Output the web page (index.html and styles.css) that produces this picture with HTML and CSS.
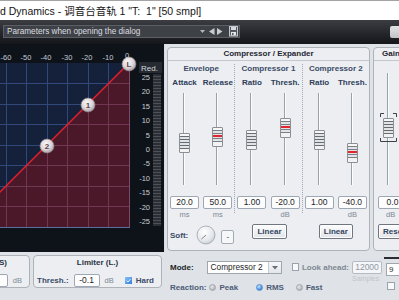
FILE: index.html
```html
<!DOCTYPE html>
<html>
<head>
<meta charset="utf-8">
<link rel="stylesheet" href="styles.css">
</head>
<body>
<div class="titlebar">d Dynamics - 调音台音轨 1 "T:&nbsp; 1" [50 smpl]</div>
<div class="toolbar">
  <div class="preset">
    <span class="preset-name">Parameters when opening the dialog</span>
    <svg class="tools" width="38" height="11" viewBox="0 0 38 11">
      <path d="M0 4h5l-2.5 3z" fill="#b4b8be"/>
      <path d="M14.5 2v7l-5.5-3.5z" fill="#c9cdd3"/>
      <path d="M17 2v7l5.5-3.5z" fill="#c9cdd3"/>
      <rect x="29.5" y="0.5" width="8" height="9.5" fill="#55585e" stroke="#c4c8ce"/>
      <rect x="31" y="1" width="5" height="3" fill="#d4d8de"/>
      <rect x="31" y="6" width="5" height="3.5" fill="#e4e7ea"/>
      <rect x="32" y="7" width="1.5" height="2" fill="#55585e"/>
    </svg>
  </div>
  <div class="tb-btn"></div>
</div>

<div class="main">
  <div class="graph">
    <svg width="164" height="208" viewBox="0 0 164 208">
      <defs>
        <clipPath id="redclip"><polygon points="129,19 129,183 -35,183"/></clipPath>
        <radialGradient id="ball" cx="42%" cy="36%" r="65%">
          <stop offset="0" stop-color="#fbf9fa"/>
          <stop offset="0.6" stop-color="#ddd6d9"/>
          <stop offset="1" stop-color="#a99fa4"/>
        </radialGradient>
        <pattern id="meterp" width="8" height="3" patternUnits="userSpaceOnUse">
          <rect width="8" height="3" fill="#2b2f35"/>
          <rect y="2" width="8" height="1" fill="#4b4f56"/>
        </pattern>
      </defs>
      <rect x="0" y="19" width="129" height="164" fill="#15213a"/>
      <g stroke="#30487a" stroke-width="1">
        <path d="M6.5 19V183M26.5 19V183M47.5 19V183M67.5 19V183M88.5 19V183M108.5 19V183"/>
        <path d="M0 39.5H129M0 60.5H129M0 80.5H129M0 101.5H129M0 121.5H129M0 142.5H129M0 162.5H129"/>
      </g>
      <polygon points="129,19 129,183 -35,183" fill="#4b1829"/>
      <g stroke="#713650" stroke-width="1" clip-path="url(#redclip)">
        <path d="M6.5 19V183M26.5 19V183M47.5 19V183M67.5 19V183M88.5 19V183M108.5 19V183"/>
        <path d="M0 39.5H129M0 60.5H129M0 80.5H129M0 101.5H129M0 121.5H129M0 142.5H129M0 162.5H129"/>
      </g>
      <path d="M129.5 19V183" stroke="#7a4a66"/>
      <path d="M0 183.5H130" stroke="#5b6f9e"/>
      <line x1="129" y1="19" x2="-35" y2="183" stroke="#e3202b" stroke-width="1.4"/>
      <g class="ball">
        <circle cx="129" cy="20" r="7" fill="url(#ball)" stroke="#8a8286" stroke-width="0.6"/>
        <text x="129" y="23" class="balltxt">L</text>
        <circle cx="88" cy="61" r="7" fill="url(#ball)" stroke="#8a8286" stroke-width="0.6"/>
        <text x="88" y="64" class="balltxt">1</text>
        <circle cx="47" cy="102" r="7" fill="url(#ball)" stroke="#8a8286" stroke-width="0.6"/>
        <text x="47" y="105" class="balltxt">2</text>
      </g>
      <g class="axis">
        <text x="6" y="16">-60</text>
        <text x="26" y="16">-50</text>
        <text x="46" y="16">-40</text>
        <text x="67" y="16">-30</text>
        <text x="87" y="16">-20</text>
        <text x="108" y="16">-10</text>
        <text x="127" y="14">0</text>
      </g>
      <rect x="139" y="18" width="23" height="11" fill="#262a31"/>
      <text x="141" y="26.5" class="redlbl">Red.</text>
      <rect x="153" y="30" width="8" height="152" fill="url(#meterp)"/>
      <g class="scale">
        <text x="150" y="36">25</text>
        <text x="150" y="50.4">20</text>
        <text x="150" y="64.8">15</text>
        <text x="150" y="79.2">10</text>
        <text x="150" y="93.6">5</text>
        <text x="150" y="108">0</text>
        <text x="150" y="122.4">-5</text>
        <text x="150" y="136.8">-10</text>
        <text x="150" y="151.2">-15</text>
        <text x="150" y="165.6">-20</text>
        <text x="150" y="180">-25</text>
      </g>
    </svg>
  </div>

  <section class="panel comp">
    <div class="ptitle">Compressor / Expander</div>
    <div class="cols">
      <div class="col">
        <div class="sub">Envelope</div>
        <div class="faders">
          <div class="fader">
            <div class="lbl">Attack</div>
            <div class="track"><div class="knob" style="top:40px"></div></div>
            <div class="num">20.0</div>
            <div class="unit">ms</div>
          </div>
          <div class="fader">
            <div class="lbl">Release</div>
            <div class="track"><div class="knob red" style="top:34px"></div></div>
            <div class="num">50.0</div>
            <div class="unit">ms</div>
          </div>
        </div>
      </div>
      <div class="col sep">
        <div class="sub">Compressor 1</div>
        <div class="faders">
          <div class="fader">
            <div class="lbl">Ratio</div>
            <div class="track"><div class="knob" style="top:37px"></div></div>
            <div class="num">1.00</div>
            <div class="unit"></div>
          </div>
          <div class="fader">
            <div class="lbl">Thresh.</div>
            <div class="track"><div class="knob red" style="top:25px"></div></div>
            <div class="num">-20.0</div>
            <div class="unit">dB</div>
          </div>
        </div>
      </div>
      <div class="col sep">
        <div class="sub">Compressor 2</div>
        <div class="faders">
          <div class="fader">
            <div class="lbl">Ratio</div>
            <div class="track"><div class="knob" style="top:37px"></div></div>
            <div class="num">1.00</div>
            <div class="unit"></div>
          </div>
          <div class="fader">
            <div class="lbl">Thresh.</div>
            <div class="track"><div class="knob red" style="top:50px"></div></div>
            <div class="num">-40.0</div>
            <div class="unit">dB</div>
          </div>
        </div>
      </div>
    </div>
    <div class="foot">
      <div class="fcol soft">
        <span class="softlbl">Soft:</span>
        <svg class="dial" width="20" height="20" viewBox="0 0 20 20">
          <defs>
            <radialGradient id="dialg" cx="40%" cy="35%" r="70%">
              <stop offset="0" stop-color="#ffffff"/>
              <stop offset="0.7" stop-color="#e4e7ea"/>
              <stop offset="1" stop-color="#c2c7cd"/>
            </radialGradient>
          </defs>
          <circle cx="10" cy="10" r="9" fill="url(#dialg)" stroke="#9ca3ab" stroke-width="0.8"/>
          <line x1="10" y1="10" x2="5.5" y2="14" stroke="#737a83" stroke-width="0.9"/>
        </svg>
        <span class="mini">-</span>
      </div>
      <div class="fcol"><span class="btn">Linear</span></div>
      <div class="fcol"><span class="btn">Linear</span></div>
    </div>
  </section>

  <section class="panel gain">
    <div class="ptitle gtitle">Gain</div>
    <div class="gbody">
      <div class="gtrack">
        <svg class="bracket" width="17" height="29" viewBox="0 0 17 29">
          <path d="M0.5 4V0.5H4M13 0.5H16.5V4M0.5 25V28.5H16.5V25" fill="none" stroke="#3c4048"/>
        </svg>
        <div class="knob" style="top:45px"></div>
      </div>
      <div class="num gnum">0.0</div>
      <div class="unit gunit">dB</div>
      <span class="btn gbtn">Reset</span>
    </div>
  </section>
</div>

<div class="bottom">
  <section class="panel spanel">
    <div class="btitle sright">(S)</div>
    <div class="brow sright-row">
      <span class="num small">0</span>
      <span class="unit2">dB</span>
    </div>
  </section>
  <section class="panel limiter">
    <div class="btitle">Limiter (L.)</div>
    <div class="brow">
      <span class="lbl2">Thresh.:</span>
      <span class="num small lim">-0.1</span>
      <span class="unit2">dB</span>
      <span class="check on"><svg width="7" height="7" viewBox="0 0 7 7"><path d="M1.5 3.5l1.5 1.5 2.5-3" fill="none" stroke="#e8f2ff" stroke-width="1"/></svg></span>
      <span class="lbl2 hard">Hard</span>
    </div>
  </section>
  <div class="modearea">
    <div class="mrow">
      <span class="modelbl">Mode:</span>
      <span class="select"><span class="seltxt">Compressor 2</span><span class="selbtn"><svg width="6" height="4" viewBox="0 0 6 4"><path d="M0 0h6L3 3.5z" fill="#6a717a"/></svg></span></span>
      <span class="check off"></span>
      <span class="lalbl">Look ahead:</span>
      <span class="lawrap"><span class="num lainput">12000</span><span class="samples">Samples</span></span>
    </div>
    <div class="rrow">
      <span class="reactlbl">Reaction:</span>
      <span class="radio gray r1"></span><span class="rlbl">Peak</span>
      <span class="radio blue r2"></span><span class="rlbl">RMS</span>
      <span class="radio gray r3"></span><span class="rlbl">Fast</span>
    </div>
  </div>
  <div class="edge">
    <div class="ebar"></div>
    <div class="ebox">9</div>
    <div class="echeck"></div>
  </div>
</div>
</body>
</html>
```

FILE: styles.css
```css
html, body {
  margin: 0;
  padding: 0;
}
body {
  width: 399px;
  height: 300px;
  overflow: hidden;
  background: #dfe2e6;
  font-family: "Liberation Sans", "Noto Sans CJK SC", sans-serif;
  color: #222;
}

/* title bar */
.titlebar {
  height: 19px;
  border-top: 1px solid #a3a3a3;
  background: #ffffff;
  font-size: 10.5px;
  line-height: 20px;
  color: #151515;
  white-space: nowrap;
}

/* toolbar */
.toolbar {
  height: 24px;
  box-sizing: border-box;
  padding-top: 5px;
  display: flex;
  align-items: flex-start;
  background: linear-gradient(#3b3d42, #23252a 60%, #14161a);
}
.preset {
  flex: none;
  margin-left: 3px;
  width: 237px;
  height: 13px;
  box-sizing: border-box;
  border: 1px solid #5c5f65;
  background: #3e4146;
  display: flex;
  align-items: center;
}
.preset-name {
  flex: 1;
  padding-left: 3px;
  font-size: 8.2px;
  color: #dcdde0;
  white-space: nowrap;
}
.tools {
  flex: none;
  margin-right: 1px;
}
.tb-btn {
  flex: none;
  margin-left: 150px;
  margin-top: 1px;
  width: 14px;
  height: 12px;
  border-radius: 2px;
  background: linear-gradient(#e2e4e7, #bfc2c6);
}

/* main row */
.main {
  display: flex;
  height: 208px;
}
.graph {
  flex: none;
  width: 164px;
  height: 208px;
  background: #0e131a;
  border-right: 1px solid #d8dce1;
}
.graph svg { display: block; }
.axis text {
  font-family: "Liberation Sans", sans-serif;
  font-size: 7.5px;
  fill: #c3cad6;
  text-anchor: middle;
}
.balltxt {
  font-family: "Liberation Sans", sans-serif;
  font-size: 8px;
  font-weight: bold;
  fill: #5a484f;
  text-anchor: middle;
}
.redlbl {
  font-family: "Liberation Sans", sans-serif;
  font-size: 8px;
  fill: #d4d8dd;
}
.scale text {
  font-family: "Liberation Sans", sans-serif;
  font-size: 7.5px;
  fill: #c8cdd4;
  text-anchor: end;
}

.panel {
  flex: none;
  box-sizing: border-box;
  background: #eceef1;
  border: 1px solid #aeb3ba;
  border-radius: 4px;
}
.comp {
  margin-left: 2px;
  margin-top: 3px;
  width: 203px;
  height: 204px;
  display: flex;
  flex-direction: column;
}
.ptitle {
  height: 13px;
  box-sizing: border-box;
  border-bottom: 1px solid #c3c8ce;
  text-align: center;
  font-size: 8px;
  font-weight: bold;
  line-height: 12px;
  color: #1f2631;
}
.cols {
  display: flex;
  height: 159px;
}
.col {
  flex: 1;
  margin-top: 3px;
  height: 149px;
}
.col.sep {
  border-left: 1px dotted #9ea8b6;
}
.sub {
  height: 10px;
  line-height: 10px;
  text-align: center;
  font-size: 8px;
  font-weight: bold;
  color: #3b4b67;
}
.faders {
  display: flex;
  margin-top: 4px;
}
.fader {
  flex: 1;
  display: flex;
  flex-direction: column;
  align-items: center;
}
.lbl {
  height: 10px;
  line-height: 10px;
  font-size: 8px;
  font-weight: bold;
  color: #2d3d59;
  white-space: nowrap;
}
.track, .gtrack {
  position: relative;
  width: 11px;
  height: 92px;
  margin-top: 5px;
}
.track::before, .gtrack::before {
  content: "";
  position: absolute;
  left: 4px;
  top: 0;
  bottom: 0;
  width: 2px;
  background: linear-gradient(to right, #98a0a9 50%, #fdfdfd 50%);
}
.knob {
  position: absolute;
  left: 0;
  width: 11px;
  height: 20px;
  box-sizing: border-box;
  border: 1px solid #8b9097;
  border-radius: 1px;
  background: linear-gradient(#f7f7f7 0 2px, #676b72 2px 3px, #e2e3e5 3px 5px, #676b72 5px 6px, #e2e3e5 6px 8px, #676b72 8px 9px, #e2e3e5 9px 11px, #676b72 11px 12px, #e2e3e5 12px 14px, #676b72 14px 15px, #f2f2f3 15px);
}
.knob.red {
  background: linear-gradient(#f7f7f7 0 2px, #7a7e85 2px 3px, #e2e3e5 3px 5px, #7a7e85 5px 6px, #e2e3e5 6px 7px, #e2262d 7px 9px, #e2e3e5 9px 10px, #7a7e85 10px 11px, #e2e3e5 11px 13px, #7a7e85 13px 14px, #f2f2f3 14px);
}
.num {
  box-sizing: border-box;
  width: 29px;
  height: 13px;
  margin-top: 11px;
  border: 1px solid #9ea8b4;
  border-radius: 2px;
  background: #fdfdfe;
  font-size: 8.5px;
  line-height: 11px;
  text-align: center;
  color: #1e1e1e;
}
.unit {
  height: 10px;
  line-height: 11px;
  font-size: 7.5px;
  color: #7d8997;
}
.foot {
  display: flex;
  padding-top: 4px;
}
.fcol {
  flex: 1;
  display: flex;
  justify-content: center;
  align-items: flex-start;
}
.fcol.soft {
  justify-content: flex-start;
  align-items: center;
  padding-left: 2px;
  margin-top: 1px;
}
.softlbl {
  font-size: 8px;
  font-weight: bold;
  color: #3b4b67;
  margin-right: 8px;
}
.dial {
  display: block;
}
.mini {
  margin-left: 5px;
  margin-top: 4px;
  width: 13px;
  height: 14px;
  box-sizing: border-box;
  border: 1px solid #a2aab4;
  border-radius: 2px;
  background: #f6f7f9;
  font-size: 8px;
  line-height: 12px;
  text-align: center;
  color: #333;
}
.btn {
  display: inline-block;
  height: 15px;
  box-sizing: border-box;
  padding: 0 4px;
  border: 1px solid #6f7680;
  border-radius: 2px;
  background: linear-gradient(#fdfdfd, #e1e4e8);
  box-shadow: inset 0 0 0 1px #ffffff;
  font-size: 8px;
  font-weight: bold;
  line-height: 13px;
  color: #34445e;
  white-space: nowrap;
}

/* gain */
.gain {
  margin-left: 3px;
  margin-top: 3px;
  width: 44px;
  height: 204px;
}
.gtitle {
  text-align: left;
  padding-left: 8px;
}
.gbody {
  padding-left: 4px;
  display: flex;
  flex-direction: column;
  align-items: flex-start;
}
.gtrack {
  height: 112px;
  margin-top: 12px;
  margin-left: 5px;
}
.bracket {
  position: absolute;
  left: -3px;
  top: 40px;
}
.gnum { margin-top: 11px; }
.gunit { margin-left: 8px; }
.gbtn { margin-top: 5px; }

/* bottom */
.bottom {
  display: flex;
  height: 48px;
}
.spanel, .limiter {
  margin-top: 3px;
  height: 33px;
}
.spanel {
  width: 60px;
  margin-left: -30px;
}
.limiter {
  margin-left: 3px;
  width: 129px;
}
.btitle {
  height: 12px;
  line-height: 13px;
  text-align: center;
  font-size: 8px;
  font-weight: bold;
  color: #2b3442;
}
.sright {
  text-align: right;
  padding-right: 22px;
}
.brow {
  display: flex;
  align-items: center;
  height: 14px;
  margin-top: 5px;
  padding-left: 3px;
}
.sright-row {
  justify-content: flex-end;
  padding-right: 7px;
}
.num.small {
  margin-top: 0;
  width: 26px;
}
.num.lim { margin-left: 5px; }
.lbl2 {
  font-size: 8px;
  font-weight: bold;
  color: #3b4b67;
}
.unit2 {
  font-size: 7.5px;
  color: #7d8997;
  margin-left: 5px;
}
.check {
  display: inline-block;
  box-sizing: border-box;
  width: 7px;
  height: 7px;
}
.check svg { display: block; }
.check.on {
  margin-left: 11px;
  background: linear-gradient(135deg, #8cc0f5, #2f7fe0);
  border: 0;
}
.hard { margin-left: 4px; }

.modearea {
  flex: none;
  width: 220px;
  padding-left: 8px;
  box-sizing: border-box;
  margin-left: 0;
}
.mrow {
  display: flex;
  align-items: flex-start;
  margin-top: 9px;
}
.modelbl {
  font-size: 8px;
  font-weight: bold;
  color: #1b1f26;
  line-height: 13px;
}
.select {
  margin-left: 13px;
  width: 76px;
  height: 13px;
  box-sizing: border-box;
  border: 1px solid #9ea6b0;
  background: #fff;
  display: flex;
}
.seltxt {
  flex: 1;
  font-size: 8.3px;
  line-height: 11px;
  padding-left: 3px;
  color: #1e1e1e;
  white-space: nowrap;
}
.selbtn {
  width: 12px;
  border-left: 1px solid #c5cbd2;
  background: linear-gradient(#f7f8f9, #e3e6ea);
  display: flex;
  align-items: center;
  justify-content: center;
}
.selbtn svg { display: block; }
.check.off {
  margin-left: 10px;
  margin-top: 2px;
  width: 7px;
  height: 8px;
  border: 1px solid #9aa2ac;
  background: #f8f9fa;
}
.lalbl {
  margin-left: 3px;
  font-size: 8px;
  font-weight: bold;
  color: #7f8894;
  line-height: 13px;
  white-space: nowrap;
}
.lawrap {
  margin-left: 3px;
  display: flex;
  flex-direction: column;
  align-items: flex-start;
}
.num.lainput {
  margin-top: 0;
  width: 30px;
  background: #f5f6f8;
  border-color: #b4bbc4;
  color: #9098a2;
}
.samples {
  font-size: 7px;
  line-height: 10px;
  color: #c2c6cb;
}
.rrow {
  display: flex;
  align-items: center;
  height: 10px;
  margin-top: -2px;
}
.reactlbl {
  font-size: 8px;
  font-weight: bold;
  color: #4b5c78;
}
.rlbl {
  margin-left: 3px;
  font-size: 8px;
  font-weight: bold;
  color: #4b5c78;
}
.radio {
  width: 7px;
  height: 7px;
  border-radius: 50%;
  box-sizing: border-box;
}
.radio.gray {
  background: radial-gradient(circle at 35% 35%, #e6e8ea, #9ea3aa);
  border: 1px solid #a4a9b0;
}
.radio.blue {
  background: radial-gradient(circle at 35% 30%, #cfe6ff, #3a88e4 70%);
  border: 1px solid #5b8fd0;
}
.r1 { margin-left: 3px; }
.r2 { margin-left: 18px; }
.r3 { margin-left: 12px; }

.edge {
  flex: none;
  width: 20px;
  margin-left: 2px;
}
.ebar {
  margin-top: 5px;
  height: 2px;
  background: #2a2d33;
}
.ebox {
  margin-top: 4px;
  margin-left: 2px;
  height: 13px;
  box-sizing: border-box;
  border: 1px solid #9ea6b0;
  background: #fff;
  font-size: 8px;
  line-height: 11px;
  padding-left: 2px;
  color: #333;
}
.echeck {
  margin-top: 6px;
  margin-left: 3px;
  width: 8px;
  height: 8px;
  box-sizing: border-box;
  border: 1px solid #9aa2ac;
  background: #f8f9fa;
}
```
